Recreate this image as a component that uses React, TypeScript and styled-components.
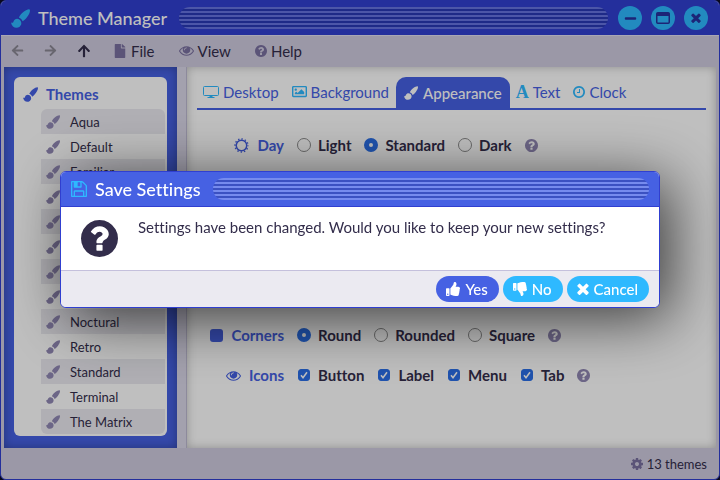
import React from 'react';
import styled, { createGlobalStyle } from 'styled-components';
import { FaArrowLeft, FaArrowRight, FaArrowUp, FaFile, FaMinus, FaRegImage, FaThumbsDown, FaThumbsUp } from 'react-icons/fa';

const color = {
  frame: '#303fd0',
  accent: '#4661e3',
  sky: '#2eb9ff',
  chrome: '#cfcbdf',
  ink: '#332d4b',
  muted: '#7a70a0',
  line: '#c4c0dc',
};

const GlobalStyle = createGlobalStyle`
  * { box-sizing: border-box; }
  html, body, #root { height: 100%; }
  body {
    margin: 0;
    background: #0c0c28;
    color: ${color.ink};
    font: 15px/20px Lato, "Open Sans", sans-serif;
    font-variant-ligatures: none;
  }
  button { font: inherit; font-variant-ligatures: none; color: inherit; border: 0; background: none; padding: 0; cursor: pointer; }
  svg { display: block; flex: none; }
`;

const paths = {
  brush: 'M17.600 .4C18.600 1.600 17.500 4.500 15.600 7C14 9.200 12.400 10.900 11 11.600C10.300 10 9.200 8.800 7.500 8.100C8.200 6.300 10 4.200 12 2.600C14.400 .8 16.800 -.2 17.600 .4ZM0 12.700C1.400 13.500 2 13 2.500 11.600C3.300 9.400 5.900 8.600 7.900 10C10.300 11.800 10.400 15 8.200 16.700C5.200 18.900 .8 17.600 0 12.700Z',
  eye: 'M1664 960q-152-236-381-353 61 104 61 225 0 185-131.500 316.500t-316.500 131.500-316.500-131.500-131.500-316.500q0-121 61-225-229 117-381 353 133 205 333.500 326.500t434.500 121.500 434.500-121.500 333.500-326.500zm-720-384q0-20-14-34t-34-14q-125 0-214.500 89.500t-89.500 214.500q0 20 14 34t34 14 34-14 14-34q0-86 61-147t147-61q20 0 34-14t14-34zm848 384q0 34-20 69-140 230-376.500 368.500t-499.500 138.500-499.500-139-376.500-368q-20-35-20-69t20-69q140-229 376.500-368t499.500-139 499.500 139 376.500 368q20 35 20 69z',
  help: 'M1024 1376v-192q0-14-9-23t-23-9h-192q-14 0-23 9t-9 23v192q0 14 9 23t23 9h192q14 0 23-9t9-23zm256-672q0-88-55.500-163t-138.500-116-170-41q-243 0-371 213-15 24 8 42l132 100q7 6 19 6 16 0 25-12 53-68 86-92 34-24 86-24 48 0 85.500 26t37.500 59q0 38-20 61t-68 45q-63 28-115.500 86.500t-52.500 125.500v36q0 14 9 23t23 9h192q14 0 23-9t9-23q0-19 21.500-49.500t54.500-49.500q32-18 49-28.500t46-35 44.500-48 28-60.500 12.500-81zm384 192q0 209-103 385.500t-279.500 279.500-385.500 103-385.500-103-279.500-279.500-103-385.500 103-385.500 279.500-279.500 385.500-103 385.500 103 279.500 279.500 103 385.500z',
  close: 'M1490 1322q0 40-28 68l-136 136q-28 28-68 28t-68-28l-294-294-294 294q-28 28-68 28t-68-28l-136-136q-28-28-28-68t28-68l294-294-294-294q-28-28-28-68t28-68l136-136q28-28 68-28t68 28l294 294 294-294q28-28 68-28t68 28l136 136q28 28 28 68t-28 68l-294 294 294 294q28 28 28 68z',
  clock: 'M1024 544v448q0 14-9 23t-23 9h-320q-14 0-23-9t-9-23v-64q0-14 9-23t23-9h224v-352q0-14 9-23t23-9h64q14 0 23 9t9 23zm416 352q0-148-73-273t-198-198-273-73-273 73-198 198-73 273 73 273 198 198 273 73 273-73 198-198 73-273zm224 0q0 209-103 385.500t-279.500 279.500-385.500 103-385.500-103-279.500-279.500-103-385.500 103-385.500 279.500-279.500 385.500-103 385.500 103 279.500 279.500 103 385.500z',
  save: 'M512 1536h768v-384h-768v384zm896 0h128v-896q0-14-10-38.500t-20-34.500l-281-281q-10-10-34-20t-39-10v416q0 40-28 68t-68 28h-576q-40 0-68-28t-28-68v-416h-128v1280h128v-416q0-40 28-68t68-28h832q40 0 68 28t28 68v416zm-384-928v-320q0-13-9.500-22.500t-22.500-9.500h-192q-13 0-22.500 9.500t-9.500 22.500v320q0 13 9.500 22.500t22.500 9.500h192q13 0 22.500-9.500t9.500-22.500zm640 32v928q0 40-28 68t-68 28h-1344q-40 0-68-28t-28-68v-1344q0-40 28-68t68-28h928q40 0 88 20t76 48l280 280q28 28 48 76t20 88z',
  cog: 'M1152 896q0-106-75-181t-181-75-181 75-75 181 75 181 181 75 181-75 75-181zm512-109v222q0 12-8 23t-20 13l-185 28q-19 54-39 91 35 50 107 138 10 12 10 25t-9 23q-27 37-99 108t-94 71q-12 0-26-9l-138-108q-44 23-91 38-16 136-29 186-7 28-36 28h-222q-14 0-24.500-8.500t-11.500-21.500l-28-184q-49-16-90-37l-141 107q-10 9-25 9-14 0-25-11-126-114-165-168-7-10-7-23 0-12 8-23 15-21 51-66.500t54-70.500q-27-50-41-99l-183-27q-13-2-21-12.500t-8-23.500v-222q0-12 8-23t19-13l186-28q14-46 39-92-40-57-107-138-10-12-10-24 0-10 9-23 26-36 98.500-107.500t94.500-71.500q13 0 26 10l138 107q44-23 91-38 16-136 29-186 7-28 36-28h222q14 0 24.500 8.500t11.500 21.500l28 184q49 16 90 37l142-107q9-9 24-9 13 0 25 10 129 119 165 170 7 8 7 22 0 12-8 23-15 21-51 66.500t-54 70.500q26 50 41 98l183 28q13 2 21 12.500t8 23.500z',
};

type GlyphName = keyof typeof paths;

const boxes: Partial<Record<GlyphName, string>> = {
  brush: '0 0 18 18',
  help: '128 128 1536 1536',
  clock: '128 128 1536 1536',
  save: '128 128 1536 1536',
  cog: '128 128 1536 1536',
  close: '302 302 1188 1252',
};

const Glyph = ({ name, size }: { name: GlyphName; size: number }) => (
  <svg width={size} height={size} viewBox={boxes[name] ?? '0 0 1792 1792'} fill="currentColor" aria-hidden="true">
    <path d={paths[name]} />
  </svg>
);

const SunIcon = () => (
  <svg width="15" height="15" viewBox="0 0 30 30" fill="none" stroke="currentColor" aria-hidden="true">
    <circle cx="15" cy="15" r="10.500" strokeWidth="3" />
    <circle cx="15" cy="15" r="13" strokeWidth="3" pathLength="120" strokeDasharray="4 6" strokeDashoffset="2" />
  </svg>
);

const SquareIcon = () => (
  <svg width="13" height="13" viewBox="0 0 13 13" fill="currentColor" aria-hidden="true">
    <rect width="13" height="13" rx="3" />
  </svg>
);

const MonitorIcon = () => (
  <svg width="16" height="12" viewBox="0 0 16 12" fill="none" stroke="currentColor" aria-hidden="true">
    <rect x="0.500" y="0.500" width="15" height="9" rx="1" />
    <path d="M4.500 11.500h7" />
    <path d="M6.500 10.500h3" />
  </svg>
);

const MaximizeIcon = () => (
  <svg width="14" height="12" viewBox="0 0 14 12" fill="none" stroke="currentColor" aria-hidden="true">
    <rect x="0.750" y="0.750" width="12.500" height="10.500" rx="1" strokeWidth="1.500" />
    <path d="M1 2.500h12" strokeWidth="3" />
  </svg>
);

const Window = styled.div`
  min-height: 100%;
  display: flex;
  flex-direction: column;
  border: 1px solid ${color.frame};
  border-radius: 6px;
  background: ${color.chrome};
  overflow: hidden;
`;

const TitleBar = styled.header<{ $tone: string }>`
  display: flex;
  align-items: center;
  gap: 10px;
  height: 35px;
  padding: 0 10px;
  color: #fff;
  background: ${(p) => p.$tone};
  border-bottom: 1px solid ${(p) => (p.$tone === color.frame ? '#e2dff0' : color.frame)};
`;

const Caption = styled.h1`
  margin: 0;
  padding-right: 2px;
  display: flex;
  align-items: center;
  gap: 8px;
  font-size: 18px;
  line-height: 24px;
  font-weight: 500;
  white-space: nowrap;
  svg { color: ${color.sky}; }
`;

const Grip = styled.div<{ $light: string; $dark: string }>`
  flex: 1;
  height: 22px;
  border-radius: 11px;
  background: repeating-linear-gradient(${(p) => p.$light} 0 2px, ${(p) => p.$dark} 2px 4px);
`;

const WindowButtons = styled.div`
  display: flex;
  gap: 9px;
  padding-right: 1px;
`;

const RoundButton = styled.button`
  width: 24px;
  height: 24px;
  display: grid;
  place-items: center;
  border-radius: 50%;
  color: #26319f;
  background: ${color.sky};
`;

const MenuBar = styled.nav`
  display: flex;
  align-items: center;
  height: 31px;
  padding-bottom: 2px;
`;

const ArrowButton = styled.button`
  padding: 0 10px;
  &:disabled { color: #8b8894; cursor: default; }
`;

const MenuButton = styled.button`
  display: flex;
  align-items: center;
  gap: 4px;
  padding: 0 12px;
  svg { color: ${color.muted}; }
`;

const Body = styled.div`
  flex: 1;
  display: flex;
  padding: 0 3px;
`;

const Sidebar = styled.aside`
  width: 173px;
  padding: 10px 10px 12px;
  background: ${color.accent};
  box-shadow: inset 0 0 10px rgba(0, 0, 0, 0.3);
`;

const Splitter = styled.div`
  width: 10px;
  background: #dad7e8;
  border-right: 1px solid #bcb8d0;
`;

const ThemePanel = styled.div`
  height: 100%;
  padding: 4px 2px 2px 9px;
  border-radius: 6px;
  background: #fff;
`;

const ThemeHeading = styled.h2`
  margin: 0;
  height: 28px;
  padding-bottom: 2px;
  display: flex;
  align-items: center;
  gap: 8px;
  font-size: 15px;
  color: ${color.accent};
`;

const ThemeList = styled.ul`
  list-style: none;
  margin: 0 0 0 18px;
  padding: 0;
  border-radius: 6px;
  overflow: hidden;
`;

const ThemeItem = styled.li`
  height: 25px;
  display: flex;
  align-items: center;
  gap: 10px;
  padding-left: 5px;
  font-size: 13px;
  svg { color: #9188b4; }
  &:nth-child(odd) { background: #ebeaf0; }
`;

const Main = styled.main`
  flex: 1;
  padding: 10px;
  background: #fff;
  box-shadow: inset 0 0 10px rgba(0, 0, 0, 0.25);
`;

const Tabs = styled.div`
  display: flex;
  height: 33px;
  border-bottom: 2px solid ${color.accent};
`;

const Tab = styled.button<{ $active?: boolean }>`
  display: flex;
  align-items: center;
  gap: ${(p) => (p.$active ? '5px' : '4px')};
  padding: ${(p) => (p.$active ? '0 8px' : '0 7px 2px 6px')};
  border-radius: 10px 10px 0 0;
  color: ${(p) => (p.$active ? '#fff' : color.accent)};
  background: ${(p) => (p.$active ? color.accent : 'transparent')};
  font-weight: ${(p) => (p.$active ? 500 : 400)};
  svg { color: ${(p) => (p.$active ? '#fff' : color.sky)}; }
`;

const LetterIcon = styled.span`
  color: ${color.sky};
  font: 700 18px/20px "Liberation Serif", serif;
`;

const Settings = styled.form`
  display: grid;
  gap: 20px;
  padding-top: 25px;
`;

const SettingRow = styled.fieldset<{ $below?: boolean }>`
  display: flex;
  align-items: center;
  gap: 13px;
  min-width: 0;
  margin: ${(p) => (p.$below ? '150px 0 0' : '0')};
  padding: 0;
  border: 0;
  font-weight: 700;
`;

const SettingLabel = styled.div`
  width: 87px;
  display: flex;
  align-items: center;
  justify-content: flex-end;
  gap: 8px;
  color: ${color.accent};
`;

const Option = styled.label`
  display: flex;
  align-items: center;
  gap: 7px;
`;

const Radio = styled.input`
  appearance: none;
  width: 14px;
  height: 14px;
  margin: 0;
  border: 1px solid #8c8c8c;
  border-radius: 50%;
  background: #fff;
  &:checked { border: 5px solid #2a6fe8; }
`;

const CheckFace = styled.span`
  width: 14px;
  display: grid;
  place-items: center;
  > * { grid-area: 1 / 1; }
  svg { pointer-events: none; }
`;

const Check = styled.input`
  appearance: none;
  width: 12px;
  height: 12px;
  margin: 0;
  border: 1px solid #8c8c8c;
  border-radius: 3px;
  &:checked { border-color: #2a6fe8; background: #2a6fe8; }
`;

const Hint = styled.button`
  color: #9188b4;
`;

const StatusBar = styled.footer`
  height: 31px;
  display: flex;
  align-items: center;
  justify-content: flex-end;
  gap: 4px;
  padding-right: 12px;
  font-size: 13px;
  svg { color: ${color.muted}; }
`;

const Backdrop = styled.div`
  position: fixed;
  inset: 0;
  display: grid;
  place-items: center;
  padding: 0 60px 2px;
  background: rgba(0, 0, 0, 0.25);
`;

const Dialog = styled.section`
  width: 100%;
  max-width: 600px;
  border: 1px solid ${color.frame};
  border-radius: 6px;
  overflow: hidden;
  background: #fff;
  box-shadow: 10px 10px 60px rgba(0, 0, 0, 0.7);
`;

const Message = styled.div`
  display: flex;
  gap: 20px;
  padding: 10px 20px;
  min-height: 63px;
  svg { color: ${color.ink}; margin-top: 3px; }
  p { margin: 0; }
`;

const Actions = styled.div`
  display: flex;
  justify-content: flex-end;
  gap: 4px;
  padding: 5px 10px;
  border-top: 1px solid ${color.line};
  background: #ebeaf1;
`;

const ActionButton = styled.button<{ $primary?: boolean }>`
  display: flex;
  align-items: center;
  gap: 5px;
  height: 26px;
  padding: 0 11px 0 10px;
  border-radius: 13px;
  color: #fff;
  font-weight: 500;
  background: ${(p) => (p.$primary ? color.accent : color.sky)};
`;

const themes = ['Aqua', 'Default', 'Familiar', '', '', '', '', '', 'Noctural', 'Retro', 'Standard', 'Terminal', 'The Matrix'];

const RadioOption = ({ group, label, checked }: { group: string; label: string; checked?: boolean }) => (
  <Option>
    <Radio type="radio" name={group} defaultChecked={checked} />
    {label}
  </Option>
);

const CheckOption = ({ label }: { label: string }) => (
  <Option>
    <CheckFace>
      <Check type="checkbox" defaultChecked />
      <svg width="12" height="12" viewBox="0 0 12 12" fill="none" stroke="#fff" strokeWidth="1.600" aria-hidden="true">
        <path d="M3 6.300l2 2.400L9 3.200" />
      </svg>
    </CheckFace>
    {label}
  </Option>
);

const HelpHint = () => (
  <Hint type="button" aria-label="Help">
    <Glyph name="help" size={13} />
  </Hint>
);

export default function App() {
  return (
    <>
      <GlobalStyle />
      <Window>
        <TitleBar $tone={color.frame}>
          <Caption><Glyph name="brush" size={19} />Theme Manager</Caption>
          <Grip $light="#6673e0" $dark="#2938b4" />
          <WindowButtons>
            <RoundButton aria-label="Minimize"><FaMinus size={13} /></RoundButton>
            <RoundButton aria-label="Maximize"><MaximizeIcon /></RoundButton>
            <RoundButton aria-label="Close"><Glyph name="close" size={10} /></RoundButton>
          </WindowButtons>
        </TitleBar>
        <MenuBar>
          <ArrowButton disabled aria-label="Back"><FaArrowLeft size={13} /></ArrowButton>
          <ArrowButton disabled aria-label="Forward"><FaArrowRight size={13} /></ArrowButton>
          <ArrowButton aria-label="Up"><FaArrowUp size={14} /></ArrowButton>
          <MenuButton><FaFile size={14} />File</MenuButton>
          <MenuButton><Glyph name="eye" size={15} />View</MenuButton>
          <MenuButton><Glyph name="help" size={12} />Help</MenuButton>
        </MenuBar>
        <Body>
          <Sidebar>
            <ThemePanel>
              <ThemeHeading><Glyph name="brush" size={15} />Themes</ThemeHeading>
              <ThemeList>
                {themes.map((name, i) => (
                  <ThemeItem key={i}><Glyph name="brush" size={14} />{name}</ThemeItem>
                ))}
              </ThemeList>
            </ThemePanel>
          </Sidebar>
          <Splitter />
          <Main>
            <Tabs role="tablist">
              <Tab role="tab"><MonitorIcon />Desktop</Tab>
              <Tab role="tab"><FaRegImage size={15} />Background</Tab>
              <Tab role="tab" aria-selected $active><Glyph name="brush" size={14} />Appearance</Tab>
              <Tab role="tab"><LetterIcon aria-hidden="true">A</LetterIcon>Text</Tab>
              <Tab role="tab"><Glyph name="clock" size={12} />Clock</Tab>
            </Tabs>
            <Settings>
              <SettingRow>
                <SettingLabel><SunIcon />Day</SettingLabel>
                <RadioOption group="day" label="Light" />
                <RadioOption group="day" label="Standard" checked />
                <RadioOption group="day" label="Dark" />
                <HelpHint />
              </SettingRow>
              <SettingRow $below>
                <SettingLabel><SquareIcon />Corners</SettingLabel>
                <RadioOption group="corners" label="Round" checked />
                <RadioOption group="corners" label="Rounded" />
                <RadioOption group="corners" label="Square" />
                <HelpHint />
              </SettingRow>
              <SettingRow>
                <SettingLabel><Glyph name="eye" size={15} />Icons</SettingLabel>
                <CheckOption label="Button" />
                <CheckOption label="Label" />
                <CheckOption label="Menu" />
                <CheckOption label="Tab" />
                <HelpHint />
              </SettingRow>
            </Settings>
          </Main>
        </Body>
        <StatusBar><Glyph name="cog" size={12} />13 themes</StatusBar>
      </Window>
      <Backdrop>
        <Dialog role="dialog" aria-modal="true" aria-labelledby="dialog-title">
          <TitleBar $tone={color.accent}>
            <Caption as="h2" id="dialog-title"><Glyph name="save" size={16} />Save Settings</Caption>
            <Grip $light="#768bee" $dark="#3b51c2" />
          </TitleBar>
          <Message>
            <Glyph name="help" size={37} />
            <p>Settings have been changed. Would you like to keep your new settings?</p>
          </Message>
          <Actions>
            <ActionButton $primary><FaThumbsUp size={14} />Yes</ActionButton>
            <ActionButton><FaThumbsDown size={14} />No</ActionButton>
            <ActionButton><Glyph name="close" size={12} />Cancel</ActionButton>
          </Actions>
        </Dialog>
      </Backdrop>
    </>
  );
}
